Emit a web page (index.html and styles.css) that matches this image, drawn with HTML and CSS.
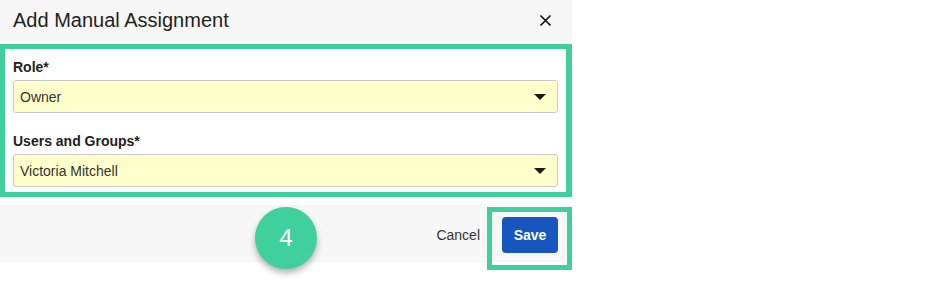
FILE: index.html
```html
<!DOCTYPE html>
<html>
<head>
<meta charset="utf-8">
<link rel="stylesheet" href="styles.css">
</head>
<body>
<div class="dialog">
  <div class="header">
    <span class="title">Add Manual Assignment</span>
    <svg class="close" width="13" height="13" viewBox="0 0 13 13"><path d="M1.5 1.5L11.5 11.5M11.5 1.5L1.5 11.5" stroke="#111" stroke-width="1.7" fill="none"/></svg>
  </div>
  <div class="body">
    <div class="label">Role*</div>
    <div class="select"><span>Owner</span><span class="caret"></span></div>
    <div class="label second">Users and Groups*</div>
    <div class="select"><span>Victoria Mitchell</span><span class="caret"></span></div>
  </div>
  <div class="footer">
    <span class="cancel">Cancel</span>
    <span class="save">Save</span>
    <div class="step">4</div>
    <div class="save-highlight"></div>
  </div>
</div>
</body>
</html>
```
FILE: styles.css
```css
html, body {
  margin: 0;
  background: #fff;
  font-family: "Liberation Sans", Arial, sans-serif;
}
body {
  min-height: 281px;
}
.dialog {
  width: 572px;
  padding-bottom: 19px;
}
.header {
  height: 42px;
  background: #f7f7f7;
  display: flex;
  align-items: center;
  justify-content: space-between;
  padding: 0 20px 0 13px;
  box-sizing: border-box;
}
.title {
  font-size: 20px;
  color: #222;
  position: relative;
  top: -1px;
}
.close {
  display: block;
  position: relative;
  top: -1px;
}
.body {
  margin-top: 2px;
  border: 5px solid #3fd09e;
  border-right-width: 6px;
  padding: 10px 8px 5px 8px;
}
.label {
  font-size: 14px;
  line-height: 16px;
  font-weight: bold;
  color: #222;
  margin-bottom: 5px;
}
.label.second {
  margin-top: 20px;
}
.select {
  height: 33px;
  box-sizing: border-box;
  background: #ffffcc;
  border: 1px solid #c9c9c9;
  border-radius: 3px;
  display: flex;
  align-items: center;
  justify-content: space-between;
  padding: 0 11px 0 6px;
  font-size: 14px;
  color: #333;
}
.caret {
  width: 0;
  height: 0;
  border-left: 6px solid transparent;
  border-right: 6px solid transparent;
  border-top: 6px solid #1a1a1a;
}
.footer {
  position: relative;
  margin-top: 8px;
  height: 57px;
  background: #f7f7f7;
  display: flex;
  align-items: center;
  justify-content: flex-end;
  padding-right: 14px;
  gap: 22px;
}
.cancel {
  font-size: 14px;
  color: #333;
  position: relative;
  top: 1px;
}
.save {
  width: 56px;
  height: 36px;
  background: #1756be;
  color: #fff;
  font-size: 14px;
  font-weight: bold;
  border-radius: 4px;
  display: flex;
  align-items: center;
  justify-content: center;
  position: relative;
  top: 1px;
}
.step {
  position: absolute;
  left: 255px;
  top: 2px;
  width: 62px;
  height: 62px;
  border-radius: 50%;
  background: #3fd09e;
  color: #fff;
  font-size: 24px;
  display: flex;
  align-items: center;
  justify-content: center;
  box-shadow: 0 4px 6px rgba(0,0,0,0.3);
}
.save-highlight {
  position: absolute;
  left: 487px;
  top: 2px;
  width: 85px;
  height: 63px;
  box-sizing: border-box;
  border: 5px solid #3fd09e;
}
```
